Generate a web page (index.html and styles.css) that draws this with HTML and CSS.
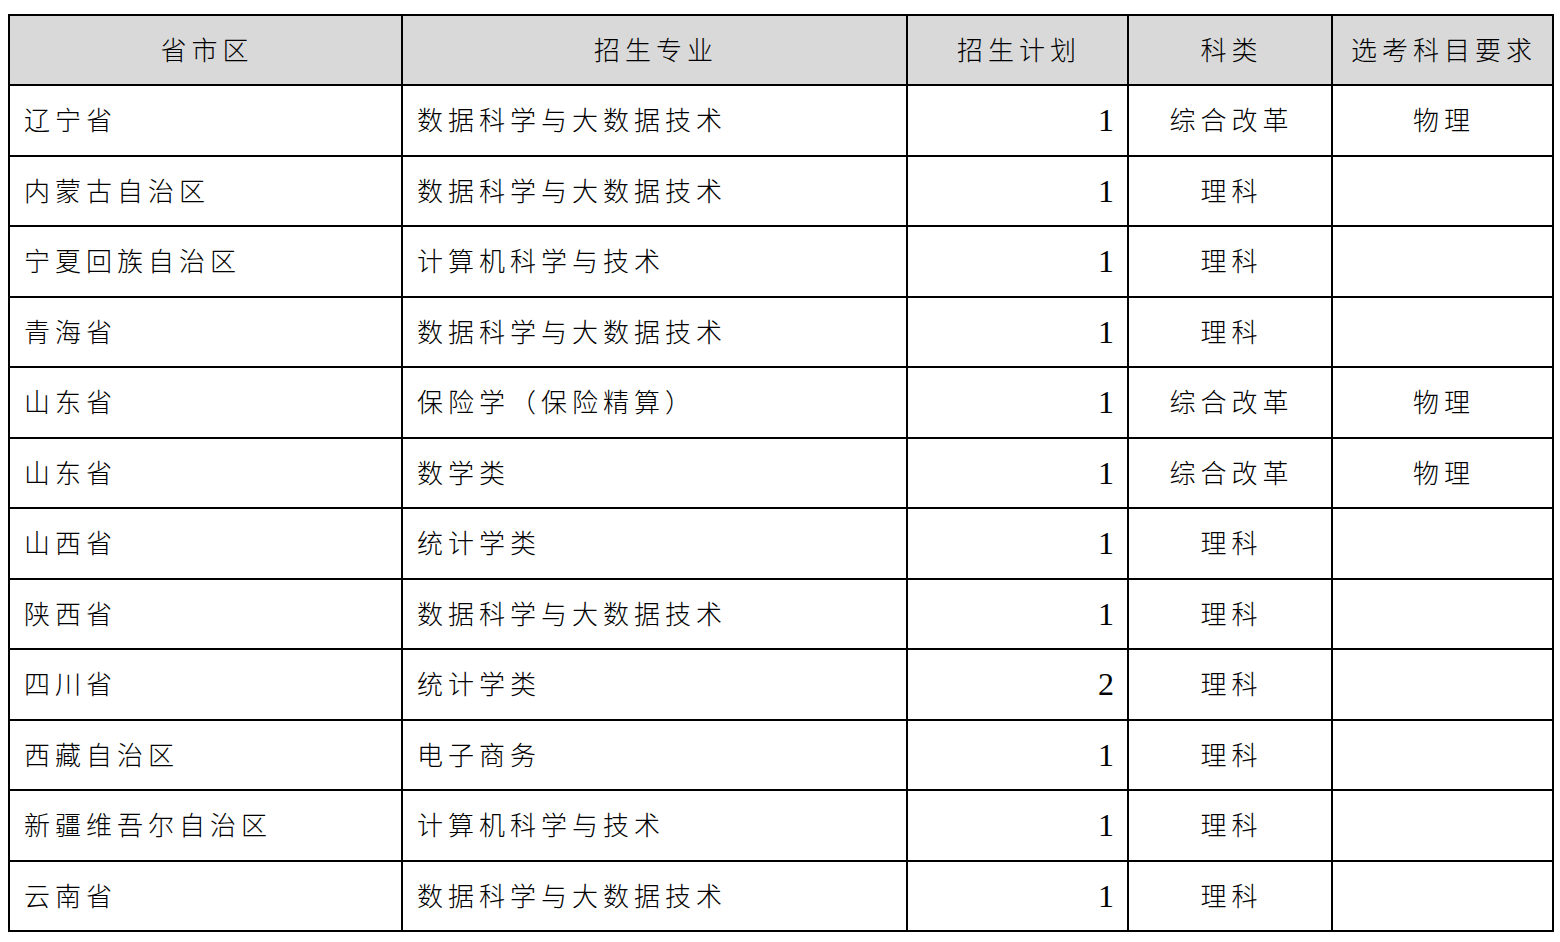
FILE: index.html
```html
<!DOCTYPE html>
<html lang="zh-CN">
<head>
<meta charset="utf-8">
<title>招生计划</title>
<link rel="stylesheet" href="styles.css">
</head>
<body>
<table class="plan">
  <colgroup>
    <col class="c-prov"><col class="c-major"><col class="c-num"><col class="c-type"><col class="c-req">
  </colgroup>
  <thead>
    <tr><th>省市区</th><th>招生专业</th><th>招生计划</th><th>科类</th><th>选考科目要求</th></tr>
  </thead>
  <tbody>
    <tr><td>辽宁省</td><td>数据科学与大数据技术</td><td class="num">1</td><td class="ctr">综合改革</td><td class="ctr">物理</td></tr>
    <tr><td>内蒙古自治区</td><td>数据科学与大数据技术</td><td class="num">1</td><td class="ctr">理科</td><td class="ctr"></td></tr>
    <tr><td>宁夏回族自治区</td><td>计算机科学与技术</td><td class="num">1</td><td class="ctr">理科</td><td class="ctr"></td></tr>
    <tr><td>青海省</td><td>数据科学与大数据技术</td><td class="num">1</td><td class="ctr">理科</td><td class="ctr"></td></tr>
    <tr><td>山东省</td><td>保险学（保险精算）</td><td class="num">1</td><td class="ctr">综合改革</td><td class="ctr">物理</td></tr>
    <tr><td>山东省</td><td>数学类</td><td class="num">1</td><td class="ctr">综合改革</td><td class="ctr">物理</td></tr>
    <tr><td>山西省</td><td>统计学类</td><td class="num">1</td><td class="ctr">理科</td><td class="ctr"></td></tr>
    <tr><td>陕西省</td><td>数据科学与大数据技术</td><td class="num">1</td><td class="ctr">理科</td><td class="ctr"></td></tr>
    <tr><td>四川省</td><td>统计学类</td><td class="num">2</td><td class="ctr">理科</td><td class="ctr"></td></tr>
    <tr><td>西藏自治区</td><td>电子商务</td><td class="num">1</td><td class="ctr">理科</td><td class="ctr"></td></tr>
    <tr><td>新疆维吾尔自治区</td><td>计算机科学与技术</td><td class="num">1</td><td class="ctr">理科</td><td class="ctr"></td></tr>
    <tr><td>云南省</td><td>数据科学与大数据技术</td><td class="num">1</td><td class="ctr">理科</td><td class="ctr"></td></tr>
  </tbody>
</table>
</body>
</html>
```
FILE: styles.css
```css
html, body {
  margin: 0;
  padding: 0;
  background: #ffffff;
}
body {
  padding: 14px 0 0 8px;
  font-family: "Noto Sans CJK SC", "Noto Sans", sans-serif;
  color: #000000;
}
.plan {
  border-collapse: collapse;
  table-layout: fixed;
  width: 1544px;
}
.c-prov { width: 393px; }
.c-major { width: 505px; }
.c-num { width: 221px; }
.c-type { width: 204px; }
.c-req { width: 221px; }
.plan th, .plan td {
  border: 2px solid #000000;
  height: 70.5px;
  box-sizing: border-box;
  padding: 0 14px 2px 14px;
  font-size: 26px;
  font-weight: 300;
  letter-spacing: 5px;
  line-height: 1;
  vertical-align: middle;
  white-space: nowrap;
  text-align: left;
}
.plan th {
  background: #d9d9d9;
  text-align: center;
  padding-left: 17px;
  padding-right: 14px;
  height: 70px;
}
.plan td.ctr {
  text-align: center;
  padding-left: 17px;
}
.plan td.num {
  text-align: right;
  font-family: "Liberation Serif", serif;
  font-size: 32px;
  font-weight: 400;
  letter-spacing: 0;
  padding-right: 13px;
  padding-bottom: 0;
}
```
